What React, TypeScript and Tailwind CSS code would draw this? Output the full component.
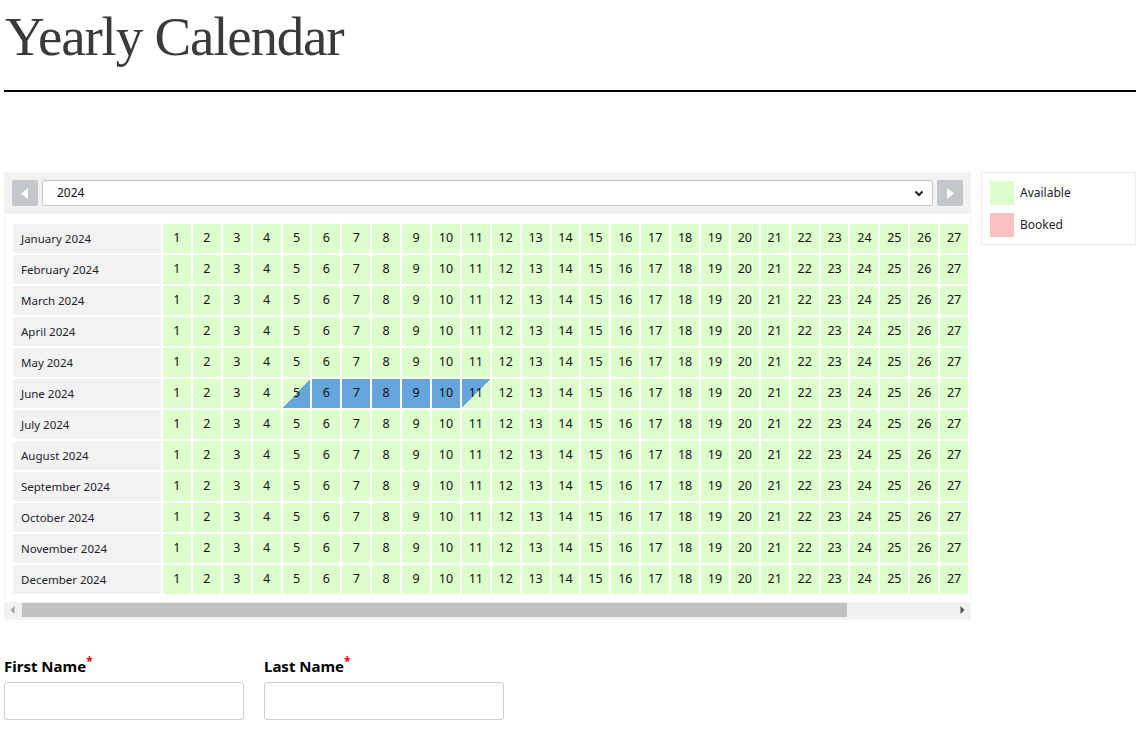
import React from "react";

const MONTHS: [string, number][] = [
	["January", 31],
	["February", 29],
	["March", 31],
	["April", 30],
	["May", 31],
	["June", 30],
	["July", 31],
	["August", 31],
	["September", 30],
	["October", 31],
	["November", 30],
	["December", 31],
];

// june 5 -> 11 is the booked range (check-in / check-out halves)
const dayBg = (m: number, d: number) => {
	if (m === 5 && d === 5) return "bg-[linear-gradient(to_bottom_right,#ddffcc_50%,#66a4dc_50%)]";
	if (m === 5 && d > 5 && d < 11) return "bg-[#66a4dc]";
	if (m === 5 && d === 11) return "bg-[linear-gradient(to_bottom_right,#66a4dc_50%,#ddffcc_50%)]";
	return "bg-[#ddffcc]";
};

const NavButton = ({ dir }: { dir: "left" | "right" }) => (
	<div className="flex h-[26px] w-[26px] shrink-0 items-center justify-center rounded-[2px] bg-[#c3c7cb]">
		<svg width="8" height="11" viewBox="0 0 8 11">
			{dir === "left" ? <polygon points="7,0 7,11 0,5.5" fill="#fff" /> : <polygon points="1,0 1,11 8,5.5" fill="#fff" />}
		</svg>
	</div>
);

const MonthRow = ({ name, days, index }: { name: string; days: number; index: number }) => (
	<div className="flex gap-[2px]">
		<div className="flex h-[29px] w-[148px] shrink-0 items-center bg-[#f2f2f2] pl-2 text-[11.5px] text-[#1c1c2e]">
			{name} 2024
		</div>
		{Array.from({ length: days }, (_, i) => i + 1).map((d) => (
			<div
				key={d}
				className={`flex h-[29px] w-[27.9px] shrink-0 items-center justify-center text-[12.5px] text-[#111] ${dayBg(index, d)}`}
			>
				{d}
			</div>
		))}
	</div>
);

const Calendar = () => (
	<div className="w-[967px] shrink-0 bg-[#f2f2f2] pb-[2px]">
		<div className="flex h-[42px] items-center gap-1 px-2">
			<NavButton dir="left" />
			<div className="flex h-[26px] flex-1 items-center justify-between rounded-[2px] border border-[#c4c4c4] bg-white pl-[14px] pr-[8px] text-[12px] text-[#111]">
				<span>2024</span>
				<svg width="10" height="7" viewBox="0 0 10 7">
					<polyline points="1.5,1.5 5,5 8.5,1.5" fill="none" stroke="#222" strokeWidth="2" />
				</svg>
			</div>
			<NavButton dir="right" />
		</div>
		<div className="mx-px overflow-hidden bg-white pt-[10px]">
			<div className="flex flex-col gap-[2px] pl-2">
				{MONTHS.map(([name, days], i) => (
					<MonthRow key={name} name={name} days={days} index={i} />
				))}
			</div>
			<div className="mt-2 flex h-4 items-center bg-[#f1f1f1]">
				<div className="flex h-4 w-[15px] shrink-0 items-center justify-center">
					<svg width="5" height="8" viewBox="0 0 5 8">
						<polygon points="4.5,0 4.5,8 0.5,4" fill="#a3a3a3" />
					</svg>
				</div>
				<div className="flex-1">
					<div className="ml-[2px] h-[14px] w-[825px] bg-[#c1c1c1]" />
				</div>
				<div className="flex h-4 w-[15px] shrink-0 items-center justify-center">
					<svg width="5" height="8" viewBox="0 0 5 8">
						<polygon points="0.5,0 0.5,8 4.5,4" fill="#505050" />
					</svg>
				</div>
			</div>
		</div>
	</div>
);

const Legend = () => (
	<div className="flex h-[73px] w-[155px] flex-col gap-2 border border-[#ececec] p-2 text-[12px] leading-6 text-[#1c1c2e]">
		<div className="flex h-6 items-center gap-[6px]">
			<span className="h-6 w-6 bg-[#ddffcc]" />
			<span>Available</span>
		</div>
		<div className="flex h-6 items-center gap-[6px]">
			<span className="h-6 w-6 bg-[#f9c1c1]" />
			<span>Booked</span>
		</div>
	</div>
);

const Field = ({ label }: { label: string }) => (
	<div className="flex w-[240px] flex-col gap-[6px]">
		<label className="pt-px text-[15px] font-bold leading-5 text-black">
			{label}
			<span className="align-top text-[12px] leading-none text-[#e00]">*</span>
		</label>
		<div className="h-[38px] rounded-[3px] border border-[#cccccc] bg-white" />
	</div>
);

export default function App() {
	return (
		<div className="min-h-screen bg-white px-1 font-['Noto_Sans',sans-serif]">
			<h1 className="pl-px pt-[9px] font-['Liberation_Serif',serif] text-[55px] font-normal leading-none tracking-[-1.2px] text-[#3a3a3a]">
				Yearly Calendar
			</h1>
			<div className="mt-[26px] border-b-2 border-black" />

			<div className="mt-[80px] flex gap-[10px]">
				<Calendar />
				<Legend />
			</div>

			<div className="mt-[35px] flex gap-5">
				<Field label="First Name" />
				<Field label="Last Name" />
			</div>
		</div>
	);
}
